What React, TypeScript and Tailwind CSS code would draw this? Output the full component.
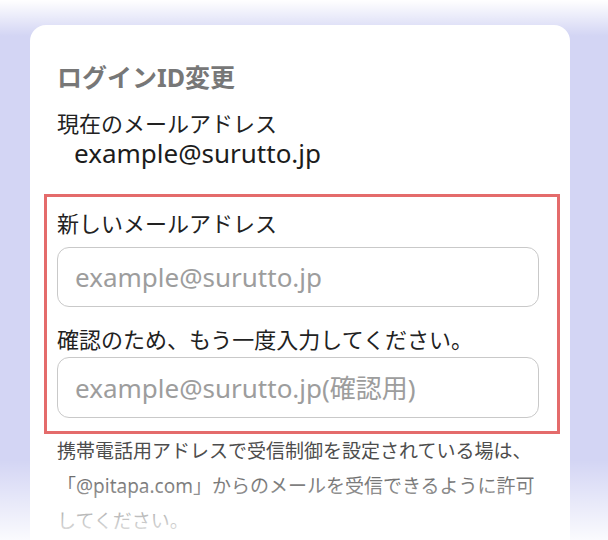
export default function App() {
    return (
        <div className="relative h-[540px] overflow-hidden bg-[#d3d5f4] font-['Noto_Sans','Noto_Sans_CJK_JP',sans-serif]">
            <div className="ml-[30px] mr-[38px] mt-[25px] rounded-t-[16px] bg-white pl-[27px] pr-[31px] pt-[37px] pb-10">
                <h1 className="text-[25px] leading-[30px] font-bold text-[#777]">ログインID変更</h1>

                {/* Current address */}
                <p className="mt-[18px] text-[22px] leading-[26px] text-[#222]">現在のメールアドレス</p>
                <p className="pl-[17px] text-[26px] leading-[34px] text-[#1c1c1c]">example@surutto.jp</p>

                {/* Highlighted fields */}
                <div className="mt-[24px] -ml-[13px] -mr-[21px] border-[3px] border-[#e46b6b] pl-[10px] pr-[18px] pt-[11px] pb-[13px]">
                    <label className="block text-[22px] leading-[30px] text-[#222]">新しいメールアドレス</label>
                    <input
                        type="email"
                        placeholder="example@surutto.jp"
                        className="mt-[9px] block h-[60px] w-full rounded-[12px] border-[1.5px] border-[#c9c9c9] bg-white px-[17px] text-[26px] text-[#222] placeholder:text-[#9d9d9d] focus:outline-none"
                    />
                    <label className="mt-[17px] block text-[22px] leading-[30px] text-[#222]">確認のため、もう一度入力してください。</label>
                    <input
                        type="email"
                        placeholder="example@surutto.jp(確認用)"
                        className="mt-[3px] block h-[61px] w-full rounded-[12px] border-[1.5px] border-[#c9c9c9] bg-white px-[17px] text-[26px] text-[#222] placeholder:text-[#9d9d9d] focus:outline-none"
                    />
                </div>

                <p className="text-[19px] leading-[35px] text-[#4d4d4d]">
                    携帯電話用アドレスで受信制御を設定されている場は、「@pitapa.com」からのメールを受信できるように許可してください。
                </p>
            </div>

            {/* fades */}
            <div className="pointer-events-none absolute inset-x-0 top-0 h-[36px] bg-linear-to-b from-white to-white/0" />
            <div className="pointer-events-none absolute inset-x-0 bottom-0 h-[80px] bg-linear-to-b from-white/0 to-white/90" />
        </div>
    );
}
